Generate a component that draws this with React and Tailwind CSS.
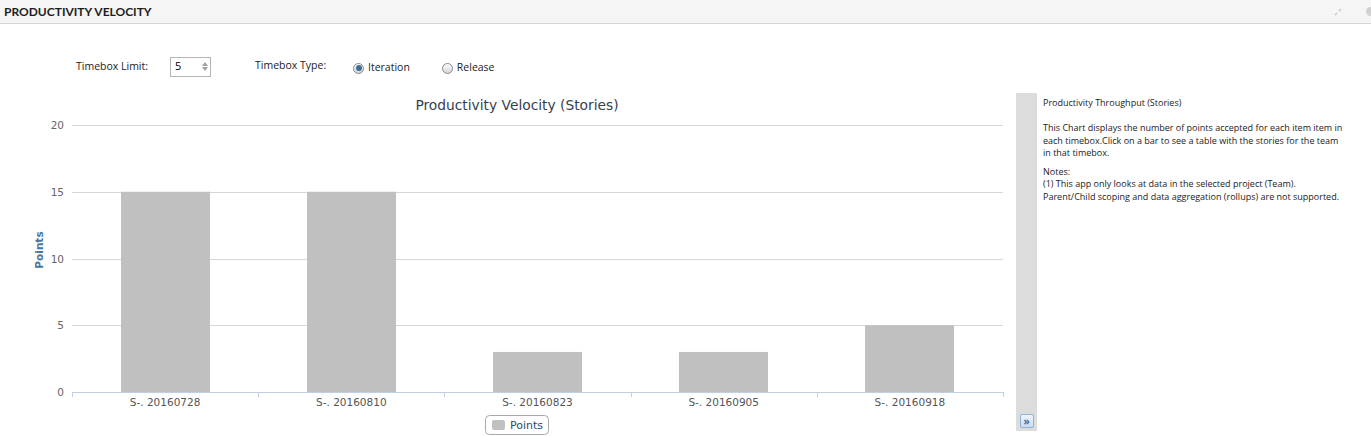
import React from "react";

const bars = [
  { label: "S-. 20160728", value: 15 },
  { label: "S-. 20160810", value: 15 },
  { label: "S-. 20160823", value: 3 },
  { label: "S-. 20160905", value: 3 },
  { label: "S-. 20160918", value: 5 },
];

// chart geometry (svg coords; svg starts at page y=90)
const plotLeft = 72;
const plotRight = 1003;
const plotBottom = 302;
const unit = 66.75 / 5;
const catWidth = (plotRight - plotLeft) / bars.length;

const VelocityChart = () => (
  <svg width="1010" height="346" className="block" style={{ fontFamily: '"DejaVu Sans", sans-serif' }}>
    <text x="517" y="20" textAnchor="middle" fontSize="13.8" fill="#34414f">
      Productivity Velocity (Stories)
    </text>

    {[20, 15, 10, 5].map((v) => {
      const y = Math.round(plotBottom - v * unit) + 0.5;
      return <line key={v} x1={plotLeft} x2={plotRight} y1={y} y2={y} stroke="#d6d6d6" strokeWidth="1" />;
    })}
    {[0, 5, 10, 15, 20].map((v) => (
      <text
        key={v}
        x="64"
        y={plotBottom - v * unit + 4}
        textAnchor="end"
        fontSize="10.5"
        fill="#666"
      >
        {v}
      </text>
    ))}

    <text
      transform="translate(43 160) rotate(-90)"
      textAnchor="middle"
      fontSize="10.5"
      fontWeight="bold"
      fill="#4d759e"
    >
      Points
    </text>

    {bars.map((b, i) => {
      const h = b.value * unit;
      const x = plotLeft + i * catWidth + (catWidth - 89) / 2;
      return (
        <rect
          key={b.label}
          x={Math.round(x)}
          y={plotBottom - h}
          width="89"
          height={h}
          fill="#c0c0c0"
        />
      );
    })}

    <line x1={plotLeft} x2={plotRight} y1={plotBottom + 0.5} y2={plotBottom + 0.5} stroke="#c0d0e0" />
    {bars.map((b, i) => (
      <line
        key={"t" + i}
        x1={Math.round(plotLeft + i * catWidth) + 0.5}
        x2={Math.round(plotLeft + i * catWidth) + 0.5}
        y1={plotBottom}
        y2={plotBottom + 5}
        stroke="#c0d0e0"
      />
    ))}
    <line x1={plotRight + 0.5} x2={plotRight + 0.5} y1={plotBottom} y2={plotBottom + 5} stroke="#c0d0e0" />

    {bars.map((b, i) => (
      <text
        key={"l" + i}
        x={plotLeft + i * catWidth + catWidth / 2}
        y={plotBottom + 14}
        textAnchor="middle"
        fontSize="10.5"
        fill="#555"
      >
        {b.label}
      </text>
    ))}

    <rect x="485.5" y="325.5" width="63" height="19" rx="4" fill="#fff" stroke="#a8a8a8" />
    <rect x="492" y="330" width="13" height="10" rx="2" fill="#c0c0c0" />
    <text x="510" y="339" fontSize="11" fill="#274b6d">
      Points
    </text>
  </svg>
);

const Radio = ({ checked, label }) => (
  <label className="flex items-center gap-[4px] text-[10.5px] text-[#222] pt-[2px]">
    <span className="w-[11px] h-[11px] rounded-full border border-[#8a8a8a] bg-gradient-to-b from-[#fdfdfd] to-[#d6d6d6] flex items-center justify-center">
      {checked && <span className="w-[6px] h-[6px] rounded-full bg-[#3d6d99]" />}
    </span>
    {label}
  </label>
);

export default function App() {
  return (
    <div className="w-[1371px] h-[436px] bg-white overflow-hidden" style={{ fontFamily: '"Open Sans", sans-serif' }}>
      <div className="h-[24px] bg-[#f5f5f5] border-b border-[#d5d5d5] flex items-center justify-between pl-[4px]">
        <span className="text-[12px] font-bold text-[#1e1e1e]" style={{ fontFamily: 'Lato, sans-serif' }}>
          PRODUCTIVITY VELOCITY
        </span>
        <div className="flex items-center gap-[24px]">
          <svg width="8" height="8" viewBox="0 0 8 8">
            <path d="M1 7 L3 5 M5 3 L7 1" stroke="#c8c8c8" strokeWidth="1.5" />
          </svg>
          <span className="w-[5px] h-[9px] rounded-l-full bg-[#d0d0d0]" />
        </div>
      </div>

      <div className="flex">
        <div className="w-[1016px] shrink-0">
          <div className="h-[66px] pt-[33px] pl-[76px] flex items-start">
            <div className="flex items-center h-[20px]">
              <span className="text-[10.5px] text-[#222] w-[94px]">Timebox Limit:</span>
              <div className="w-[41px] h-[20px] border border-[#b5b5b5] flex items-center justify-between pl-[4px] pr-[2px] bg-white -mt-[1px]">
                <span className="text-[11px] text-black">5</span>
                <div className="flex flex-col items-center gap-[1px]">
                  <svg width="6" height="4" viewBox="0 0 6 4"><path d="M0 4 L3 0 L6 4 Z" fill="#a0a0a0" /></svg>
                  <svg width="6" height="4" viewBox="0 0 6 4"><path d="M0 0 L3 4 L6 0 Z" fill="#a0a0a0" /></svg>
                </div>
              </div>
              <span className="text-[10.5px] text-[#222] ml-[44px] w-[98px] -mt-[3px]">Timebox Type:</span>
              <Radio checked label="Iteration" />
              <span className="ml-[32px]">
                <Radio label="Release" />
              </span>
            </div>
          </div>
          <VelocityChart />
        </div>

        <div className="flex-1 flex pt-[69px]">
          <div className="w-[21px] shrink-0 h-[338px] bg-[#dcdcdc] flex flex-col justify-end items-center pb-[3px]">
            <div className="w-[14px] h-[14px] rounded-[2px] border border-[#8fb3d9] bg-gradient-to-b from-[#eef5fc] to-[#c8dcf0] flex items-center justify-center text-[#3a6ea5] text-[10px] leading-none font-bold">
              »
            </div>
          </div>
          <div className="w-[306px] pl-[6px] pt-[4px] text-[9px] leading-[12.5px] text-[#222]">
            <p>Productivity Throughput (Stories)</p>
            <p className="mt-[12.5px]">
              This Chart displays the number of points accepted for each item item in each timebox.Click on a bar to see a table with the stories for the team in that timebox.
            </p>
            <p className="mt-[6px]">Notes:</p>
            <p>
              (1) This app only looks at data in the selected project (Team).
              <br />
              Parent/Child scoping and data aggregation (rollups) are not supported.
            </p>
          </div>
        </div>
      </div>
    </div>
  );
}
